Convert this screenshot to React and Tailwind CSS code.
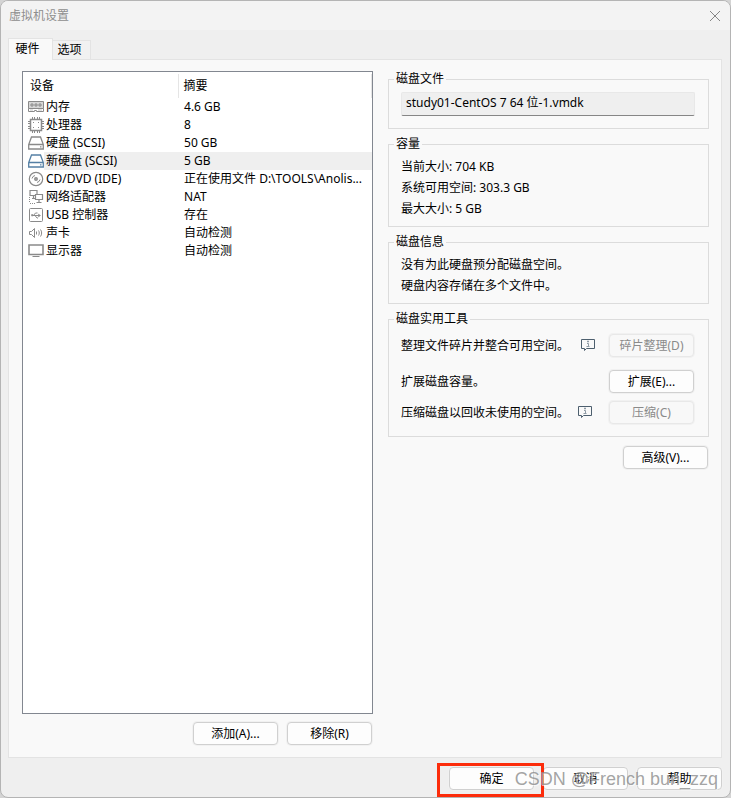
import { useState } from "react";

const DEVICES = [
  { id: "memory", name: "内存", summary: "4.6 GB" },
  { id: "cpu", name: "处理器", summary: "8" },
  { id: "disk", name: "硬盘 (SCSI)", summary: "50 GB" },
  { id: "newdisk", name: "新硬盘 (SCSI)", summary: "5 GB" },
  { id: "cd", name: "CD/DVD (IDE)", summary: "正在使用文件 D:\\TOOLS\\Anolis..." },
  { id: "network", name: "网络适配器", summary: "NAT" },
  { id: "usb", name: "USB 控制器", summary: "存在" },
  { id: "sound", name: "声卡", summary: "自动检测" },
  { id: "display", name: "显示器", summary: "自动检测" },
];

export default function App() {
  const [tab, setTab] = useState("hardware");
  const [selected, setSelected] = useState("newdisk");

  return (
    <div className="min-h-screen bg-[#d4d4d4] flex flex-col text-xs text-black font-['Noto_Sans','Noto_Sans_CJK_SC',sans-serif]">
      <div className="flex-1 flex flex-col bg-[#efefef] border border-[#b4b4b4] rounded-lg overflow-hidden">
        <header className="h-[29px] shrink-0 flex items-center justify-between bg-[#f3f3f3] px-2">
          <h1 className="text-[#8e8e8e]">虚拟机设置</h1>
          <button type="button" aria-label="关闭" className="p-px">
            <svg viewBox="0 0 12 12" className="w-3 h-3" fill="none" stroke="#858585">
              <path d="M1 1l10 10M11 1L1 11" />
            </svg>
          </button>
        </header>

        <main className="flex-1 flex flex-col pl-[7px] pr-2 pt-2">
          <div role="tablist" className="flex items-end">
            <Tab active={tab === "hardware"} onClick={() => setTab("hardware")}>硬件</Tab>
            <Tab active={tab === "options"} onClick={() => setTab("options")}>选项</Tab>
          </div>

          <div className="flex-1 grid grid-cols-[351fr_321fr] gap-[15px] bg-[#f9f9f9] border border-[#e3e3e3] pl-[13px] pr-3 pt-[11px] pb-3">
            <div className="flex flex-col">
              <div className="flex-1 bg-white border border-[#828790] pt-0.5">
                <table className="w-full table-fixed border-collapse text-left">
                  <colgroup>
                    <col className="w-[21px]" />
                    <col className="w-[134px]" />
                    <col />
                  </colgroup>
                  <thead>
                    <tr className="h-6">
                      <th colSpan={2} className="font-normal p-0 pl-[7px] border-r border-[#e5e5e5]">设备</th>
                      <th className="font-normal p-0 pl-[5px] border-r border-[#e5e5e5]">摘要</th>
                    </tr>
                  </thead>
                  <tbody>
                    {DEVICES.map((d) => (
                      <tr key={d.id} className="h-[18px] leading-[18px] group" aria-selected={selected === d.id} onClick={() => setSelected(d.id)}>
                        <td className="p-0 pl-[5px]"><DeviceIcon id={d.id} /></td>
                        <td className="p-0 pl-0.5 whitespace-nowrap group-aria-selected:bg-[#efefef]">{d.name}</td>
                        <td className="p-0 pl-1.5 truncate group-aria-selected:bg-[#efefef]">{d.summary}</td>
                      </tr>
                    ))}
                  </tbody>
                </table>
              </div>
              <div className="flex justify-end gap-[9px] pt-2 pr-px">
                <Button>添加(A)...</Button>
                <Button>移除(R)</Button>
              </div>
            </div>

            <div className="flex flex-col gap-[7px]">
              <Group title="磁盘文件">
                <input
                  readOnly
                  aria-label="磁盘文件"
                  value="study01-CentOS 7 64 位-1.vmdk"
                  className="block w-full h-6 mt-px mb-[5px] px-1 pb-1 bg-[#efefef] border border-[#e8e8e8] border-b-[#868686] rounded-xs outline-none"
                />
              </Group>
              <Group title="容量">
                <p>当前大小: 704 KB</p>
                <p>系统可用空间: 303.3 GB</p>
                <p>最大大小: 5 GB</p>
              </Group>
              <Group title="磁盘信息">
                <p>没有为此硬盘预分配磁盘空间。</p>
                <p>硬盘内容存储在多个文件中。</p>
              </Group>
              <Group title="磁盘实用工具">
                <div className="flex flex-col pt-[3px] pb-[5px] pr-px">
                  <div className="flex items-center justify-between">
                    <span>整理文件碎片并整合可用空间。</span>
                    <div className="flex items-center gap-3.5">
                      <InfoIcon />
                      <Button disabled>碎片整理(D)</Button>
                    </div>
                  </div>
                  <div className="flex items-center justify-between pt-[13px] pb-2">
                    <span>扩展磁盘容量。</span>
                    <Button>扩展(E)...</Button>
                  </div>
                  <div className="flex items-center justify-between">
                    <span>压缩磁盘以回收未使用的空间。</span>
                    <div className="flex items-center gap-[17px]">
                      <InfoIcon />
                      <Button disabled>压缩(C)</Button>
                    </div>
                  </div>
                </div>
              </Group>
              <div className="flex justify-end pt-0.5 pr-px">
                <Button>高级(V)...</Button>
              </div>
            </div>
          </div>
        </main>

        <footer className="relative shrink-0 flex justify-end gap-[9px] px-2 pt-[9px] pb-[7px]">
          <div className="relative">
            <Button>确定</Button>
            <div className="absolute -left-3 -right-[10px] -top-1 -bottom-[7px] border-3 border-[#fc2c0b] pointer-events-none" />
          </div>
          <Button>取消</Button>
          <Button>帮助</Button>
          <span className="absolute right-3 top-[9px] text-lg leading-6 whitespace-nowrap text-[#8c8c8c]/80 font-['Liberation_Sans',sans-serif] [text-shadow:1px_1px_0_#ffffff99] pointer-events-none">
            CSDN @French bun_zzq
          </span>
        </footer>
      </div>
    </div>
  );
}

function Tab({ active, onClick, children }) {
  return (
    <button
      type="button"
      role="tab"
      aria-selected={active}
      onClick={onClick}
      className={
        active
          ? "relative z-10 w-[45px] h-[22px] -mb-px pr-1.5 pb-0.5 bg-[#f9f9f9] border border-b-0 border-[#e3e3e3]"
          : "w-[38px] h-[19px] pr-1 bg-[#f1f1f1] border border-l-0 border-b-0 border-[#e3e3e3]"
      }
    >
      {children}
    </button>
  );
}

function Group({ title, children }) {
  return (
    <fieldset className="min-w-0 border border-[#dcdcdc] pl-3 pr-[13px] pt-1 pb-[7px] leading-[21px]">
      <legend className="-ml-[7px] px-0.5 leading-4">{title}</legend>
      {children}
    </fieldset>
  );
}

function Button({ disabled, children }) {
  return (
    <button
      type="button"
      disabled={disabled}
      className="w-[85px] h-[23px] shrink-0 leading-5 bg-[#fdfdfd] border border-[#d0d0d0] rounded-sm shadow-[0_0_0_1px_#f1f1f1] disabled:bg-[#f8f8f8] disabled:border-[#e8e8e8] disabled:text-[#8a8a8a]"
    >
      {children}
    </button>
  );
}

function InfoIcon() {
  return (
    <svg viewBox="0 0 14 13" className="w-3.5 h-[13px]" fill="none">
      <path d="M.5 .5h13v9H5.500L3.500 11.500v-2H.5z" stroke="#4d5f6e" />
      <path d="M6.500 2h1v1h-1zM6 4.500h1.500v3M5.500 7.500h3" stroke="#8f9ba5" />
    </svg>
  );
}

function DeviceIcon({ id }) {
  const stroke = id === "newdisk" ? "#5580a5" : "#8a8a8a";
  return (
    <svg viewBox="0 0 16 16" className="block w-4 h-4" fill="none" stroke={stroke}>
      {id === "memory" && (
        <>
          <path d="M.5 2.500h15v7H.5z" fill="#d6d6d6" />
          <path d="M3 5h2v2H3zM7 5h2v2H7zM11 5h2v2h-2z" />
          <path d="M.5 9.500v3h6v-1h2v1h7v-3" />
          <path d="M2 11h3M10 11h4" stroke="#c4c4c4" />
        </>
      )}
      {id === "cpu" && (
        <>
          <path d="M2.500 2.500h11v11h-11z" strokeWidth="1.500" />
          <path d="M4.500 0v2M6.500 0v2M9.500 0v2M11.500 0v2M4.500 14v2M6.500 14v2M9.500 14v2M11.500 14v2M0 4.500h2M0 6.500h2M0 9.500h2M0 11.500h2M14 4.500h2M14 6.500h2M14 9.500h2M14 11.500h2" />
          <path d="M5 5.500h1M10 5.500h1M5 10.500h1M10 10.500h1" />
        </>
      )}
      {(id === "disk" || id === "newdisk") && (
        <path d="M3.500 2h9L15.300 9.500V14H.700V9.500zM.700 9.500h14.600M12 11.800h1.500" strokeWidth="1.300" />
      )}
      {id === "cd" && (
        <>
          <circle cx="8" cy="8" r="6.700" strokeWidth="1.200" />
          <circle cx="8" cy="8" r="1.200" strokeWidth="1.500" />
          <path d="M4 7.500A4 4 0 0 1 7 4.500M12 8.500a4 4 0 0 1-3 3" />
        </>
      )}
      {id === "network" && (
        <>
          <path d="M2 1.500h7v5H2zM5.500 7v2M4 9.500h3" strokeWidth="1.200" />
          <path d="M7.500 5.500h7v5h-7z" fill="#fff" strokeWidth="1.200" />
          <path d="M11 11v2M8.500 13.500h5" strokeWidth="1.200" />
          <path d="M1.500 8v6M2 14.500h6" strokeDasharray="1 1" />
        </>
      )}
      {id === "usb" && (
        <>
          <rect x="1.500" y="1.500" width="13" height="13" rx="1" />
          <path d="M4 8.500h8M5.500 8.500l2-2.500h2M7 8.500l2 2.500h1" />
          <path d="M3.500 7.500h1.500v1.500H3.500zM10.500 7l2 1.500-2 1.500z" fill={stroke} strokeWidth=".5" />
        </>
      )}
      {id === "sound" && (
        <path d="M1.500 6.500h2l3-3v9l-3-3h-2zM8.500 6.500v3M10.500 5.500c1 1.500 1 3.500 0 5M12.500 4.500c1.500 2 1.500 5 0 7" />
      )}
      {id === "display" && (
        <>
          <path d="M1 2h14v9.500H1z" strokeWidth="1.600" />
          <path d="M4.500 13.500h7" />
        </>
      )}
    </svg>
  );
}
